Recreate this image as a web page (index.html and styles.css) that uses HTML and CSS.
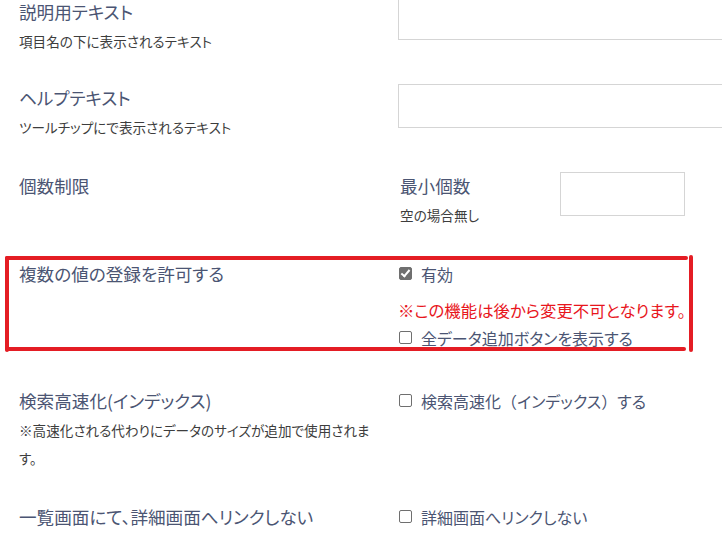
FILE: index.html
```html
<!DOCTYPE html>
<html lang="ja">
<head>
<meta charset="utf-8">
<title>項目設定</title>
<link rel="stylesheet" href="styles.css">
</head>
<body>
  <div class="form">

    <div class="row first">
      <div class="label">
        <div class="title">説明用テキスト</div>
        <div class="desc">項目名の下に表示されるテキスト</div>
      </div>
      <div class="field"><input class="text wide" type="text"></div>
    </div>

    <div class="row">
      <div class="label">
        <div class="title">ヘルプテキスト</div>
        <div class="desc">ツールチップにで表示されるテキスト</div>
      </div>
      <div class="field"><input class="text wide" type="text"></div>
    </div>

    <div class="row">
      <div class="label">
        <div class="title">個数制限</div>
      </div>
      <div class="field split">
        <div class="sublabel">
          <div class="title">最小個数</div>
          <div class="desc">空の場合無し</div>
        </div>
        <input class="text small" type="text">
      </div>
    </div>

    <div class="row marked">
      <!-- hand-drawn red annotation around this row -->
      <svg class="mark" width="700" height="110" viewBox="0 0 700 110">
        <g stroke="#e41d24" stroke-width="4" stroke-linecap="round" fill="none">
          <line x1="7" y1="3" x2="686" y2="3"/>
          <line x1="7" y1="3" x2="7" y2="95"/>
          <line x1="7" y1="94" x2="684" y2="94"/>
          <line x1="691" y1="2" x2="691" y2="95"/>
        </g>
      </svg>
      <div class="label">
        <div class="title">複数の値の登録を許可する</div>
      </div>
      <div class="field boxed">
        <label class="check"><span class="box on"></span>有効</label>
        <div class="warn">※この機能は後から変更不可となります。</div>
        <label class="check second"><span class="box"></span>全データ追加ボタンを表示する</label>
      </div>
    </div>

    <div class="row">
      <div class="label">
        <div class="title">検索高速化(インデックス)</div>
        <div class="desc">※高速化される代わりにデータのサイズが追加で使用されます。</div>
      </div>
      <div class="field">
        <label class="check"><span class="box"></span>検索高速化<span class="wide-punct">（</span>インデックス<span class="wide-punct">）</span>する</label>
      </div>
    </div>

    <div class="row">
      <div class="label">
        <div class="title">一覧画面にて、詳細画面へリンクしない</div>
      </div>
      <div class="field">
        <label class="check"><span class="box"></span>詳細画面へリンクしない</label>
      </div>
    </div>

  </div>
</body>
</html>
```

FILE: styles.css
```css
html, body
{
  margin: 0;
  padding: 0;
  background: #fff;
  overflow: hidden;
}

body
{
  font-family: "Noto Sans CJK JP", "Noto Sans", sans-serif;
  font-feature-settings: "palt";
  color: #4b5573;
}

.form
{
  padding-left: 19px;
}

.row
{
  display: grid;
  grid-template-columns: 379px 1fr;
  align-items: start;
  margin-bottom: 31px;
}

/* page is scrolled: first input is cut by the top edge */
.row.first { margin-bottom: 29px; }
.row.first > .label { padding-top: 0; }
.row.first input.text { margin-top: -4px; }

.row.marked { position: relative; }

/* red annotation frame, lies over the row */
.mark
{
  position: absolute;
  left: -19px;
  top: -5px;
  pointer-events: none;
}

.label, .sublabel { padding-top: 2px; }

.title
{
  font-size: 17.6px;
  line-height: 24px;
  white-space: nowrap;
}

.desc
{
  margin-top: 3px;
  font-size: 13.6px;
  line-height: 28px;
  color: #3d3d3d;
  padding-right: 14px;
}

.field.split
{
  display: flex;
  align-items: flex-start;
}

.field.boxed { padding-bottom: 6px; }

.sublabel
{
  width: 162px;
  padding-left: 2px;
  box-sizing: border-box;
}

input.text
{
  display: block;
  box-sizing: border-box;
  height: 44px;
  margin: 0;
  border: 1px solid #d5d5d5;
  border-radius: 0;
  background: #fff;
  outline: none;
}

input.wide { width: 340px; }
input.small { width: 125px; }

.field > .check:first-child { margin-top: 2px; }

.check
{
  display: flex;
  align-items: center;
  height: 24px;
  font-size: 16px;
  line-height: 24px;
  white-space: nowrap;
}

.check.second { margin-top: 4px; }

.wide-punct { font-feature-settings: normal; }

.box
{
  display: inline-block;
  flex: none;
  box-sizing: border-box;
  width: 13px;
  height: 13px;
  margin: 0 9px 0 1px;
  border: 1px solid #6f6f6f;
  border-radius: 2px;
  background: #fff;
  position: relative;
  top: -1px;
}

.box.on
{
  background: #6f6f6f;
  border-color: #6f6f6f;
}

.box.on::after
{
  content: "";
  position: absolute;
  left: 3px;
  top: 0px;
  width: 3px;
  height: 7px;
  border: solid #fff;
  border-width: 0 2px 2px 0;
  transform: rotate(40deg);
}

.warn
{
  margin-top: 12px;
  font-size: 16.4px;
  line-height: 24px;
  color: #e8161d;
  white-space: nowrap;
}
```
